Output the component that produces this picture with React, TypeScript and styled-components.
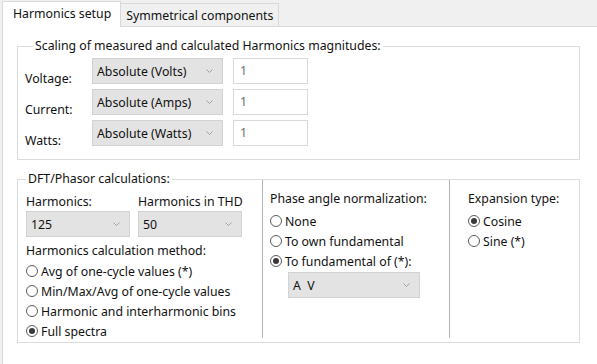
import styled, { createGlobalStyle } from 'styled-components'

const Global = createGlobalStyle`
  html, body {
    margin: 0;
    padding: 0;
    background: #ffffff;
  }
  body {
    font-family: "Noto Sans", "Open Sans", sans-serif;
    font-size: 12.3px;
    color: #111;
  }
`;

const Window = styled.div`
  width: 597px;
  height: 364px;
  display: flex;
  flex-direction: column;
  background: #f0f0f0;
  overflow: hidden;
`;

const TabStrip = styled.div`
  height: 26px;
  display: flex;
  align-items: flex-end;
  padding-left: 2px;
`;

const Tab = styled.div<{ $active?: boolean }>`
  box-sizing: border-box;
  display: flex;
  align-items: center;
  border: 1px solid #d9d9d9;
  border-bottom: none;
  white-space: nowrap;
  ${p => p.$active
    ? `
    position: relative;
    z-index: 1;
    height: 26px;
    margin-bottom: -1px;
    padding: 0 9px 2px 10px;
    background: #fff;
  `
    : `
    height: 23px;
    padding: 0 5px 0 5px;
    border-left: none;
    background: #f0f0f0;
  `}
`;

const Page = styled.div`
  flex: 1;
  margin-left: 2px;
  background: #fff;
  border-top: 1px solid #d9d9d9;
  border-left: 1px solid #d9d9d9;
  display: flex;
  flex-direction: column;
`;

const Group = styled.fieldset<{ $pad: string }>`
  margin: 11px 17px 0 14px;
  padding: ${p => p.$pad};
  border: 1px solid #dcdcdc;
  min-width: 0;
`;

const Legend = styled.legend`
  margin-left: 8px;
  padding: 0 2px;
  line-height: 16px;
`;

const ScaleRows = styled.div`
  display: flex;
  flex-direction: column;
  gap: 5px;
`;

const ScaleRow = styled.div`
  display: flex;
  height: 26px;
`;

const RowLabel = styled.div`
  width: 67px;
  padding-top: 13px;
  line-height: 16px;
`;

const Combo = styled.div<{ $w: number }>`
  box-sizing: border-box;
  width: ${p => p.$w}px;
  height: 26px;
  background: #e3e3e3;
  border: 1px solid #d2d2d2;
  display: flex;
  align-items: center;
  justify-content: space-between;
  padding: 0 9px 0 4px;
  white-space: nowrap;
`;

const Chevron = () => (
  <svg width="7" height="4" viewBox="0 0 7 4">
    <polyline points="0.5,0.5 3.5,3.5 6.5,0.5" fill="none" stroke="#a0a0a0" strokeWidth="1" />
  </svg>
);

const TextBox = styled.div`
  box-sizing: border-box;
  width: 75px;
  height: 26px;
  margin-left: 10px;
  border: 1px solid #d9d9d9;
  background: #fff;
  color: #6d6d6d;
  padding: 4px 0 0 6px;
  line-height: 16px;
`;

const Columns = styled.div`
  display: flex;
  margin-top: -7px;
  height: 158px;
`;

const Column = styled.div<{ $w?: number; $pl: number; $pt: number; $divider?: boolean }>`
  box-sizing: border-box;
  ${p => (p.$w ? `width: ${p.$w}px;` : 'flex: 1;')}
  padding: ${p => p.$pt}px 0 0 ${p => p.$pl}px;
  ${p => (p.$divider ? 'border-left: 1px solid #b4b4b4;' : '')}
  display: flex;
  flex-direction: column;
`;

const Caption = styled.div<{ $mt?: number }>`
  line-height: 16px;
  margin-top: ${p => p.$mt ?? 0}px;
  white-space: nowrap;
`;

const Pair = styled.div`
  display: grid;
  grid-template-columns: 104px 104px;
  column-gap: 8px;
  row-gap: 1px;
`;

const RadioList = styled.div<{ $mt: number }>`
  display: flex;
  flex-direction: column;
  margin-top: ${p => p.$mt}px;
`;

const RadioRow = styled.div`
  height: 20px;
  display: flex;
  align-items: center;
  white-space: nowrap;
`;

const RadioDot = styled.span<{ $on?: boolean }>`
  box-sizing: border-box;
  width: 12px;
  height: 12px;
  border-radius: 50%;
  border: 1px solid #5a5a5a;
  background: #fff;
  margin-right: 3px;
  display: flex;
  align-items: center;
  justify-content: center;
  &::after {
    content: '';
    width: 6px;
    height: 6px;
    border-radius: 50%;
    background: ${p => (p.$on ? '#3a3a3a' : 'transparent')};
  }
`;

const Indented = styled.div`
  margin: 1px 0 0 18px;
`;

const Radio = ({ label, on }: { label: string; on?: boolean }) => (
  <RadioRow>
    <RadioDot $on={on} />
    {label}
  </RadioRow>
);

const scaling = [
  { label: 'Voltage:', mode: 'Absolute (Volts)' },
  { label: 'Current:', mode: 'Absolute (Amps)' },
  { label: 'Watts:', mode: 'Absolute (Watts)' },
];

const App = () => {
  return (
    <Window>
      <Global />
      <TabStrip>
        <Tab $active>Harmonics setup</Tab>
        <Tab>Symmetrical components</Tab>
      </TabStrip>
      <Page>
        <Group $pad="4px 0 13px 7px">
          <Legend>Scaling of measured and calculated Harmonics magnitudes:</Legend>
          <ScaleRows>
            {scaling.map(s => (
              <ScaleRow key={s.label}>
                <RowLabel>{s.label}</RowLabel>
                <Combo $w={131}>
                  {s.mode}
                  <Chevron />
                </Combo>
                <TextBox>1</TextBox>
              </ScaleRow>
            ))}
          </ScaleRows>
        </Group>

        <Group $pad="0 0 4px 0">
          <Legend>DFT/Phasor calculations:</Legend>
          <Columns>
            <Column $w={244} $pl={8} $pt={14}>
              <Pair>
                <Caption>Harmonics:</Caption>
                <Caption>Harmonics in THD</Caption>
                <Combo $w={104}>
                  125
                  <Chevron />
                </Combo>
                <Combo $w={104}>
                  50
                  <Chevron />
                </Combo>
              </Pair>
              <Caption $mt={6}>Harmonics calculation method:</Caption>
              <RadioList $mt={2}>
                <Radio label="Avg of one-cycle values (*)" />
                <Radio label="Min/Max/Avg of one-cycle values" />
                <Radio label="Harmonic and interharmonic bins" />
                <Radio label="Full spectra" on />
              </RadioList>
            </Column>
            <Column $w={187} $pl={7} $pt={11} $divider>
              <Caption>Phase angle normalization:</Caption>
              <RadioList $mt={4}>
                <Radio label="None" />
                <Radio label="To own fundamental" />
                <Radio label="To fundamental of (*):" on />
              </RadioList>
              <Indented>
                <Combo $w={132}>
                  {'A\u00a0\u00a0V'}
                  <Chevron />
                </Combo>
              </Indented>
            </Column>
            <Column $pl={18} $pt={11} $divider>
              <Caption>Expansion type:</Caption>
              <RadioList $mt={4}>
                <Radio label="Cosine" on />
                <Radio label="Sine (*)" />
              </RadioList>
            </Column>
          </Columns>
        </Group>
      </Page>
    </Window>
  )
}

export default App
